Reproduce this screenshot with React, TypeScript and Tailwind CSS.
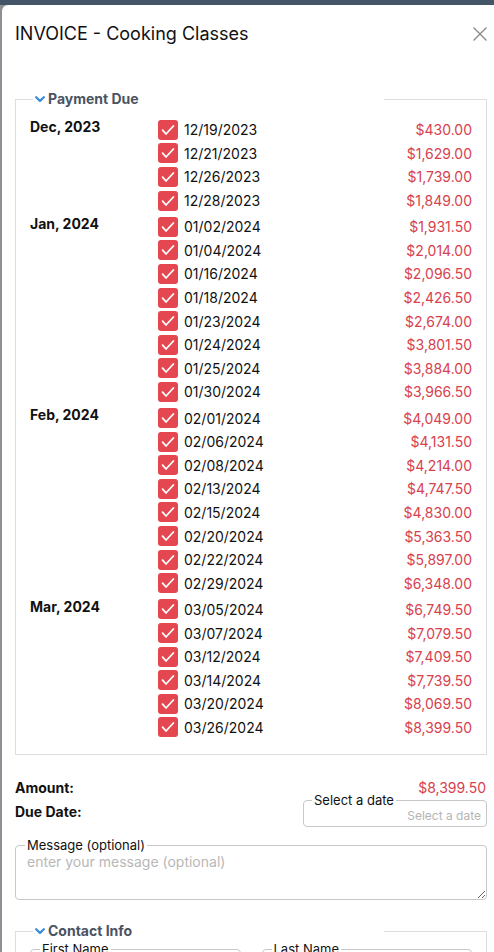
import React from "react";

type Group = { month: string; rows: [string, string][] };

const groups: Group[] = [
  {
    month: "Dec, 2023",
    rows: [
      ["12/19/2023", "$430.00"],
      ["12/21/2023", "$1,629.00"],
      ["12/26/2023", "$1,739.00"],
      ["12/28/2023", "$1,849.00"],
    ],
  },
  {
    month: "Jan, 2024",
    rows: [
      ["01/02/2024", "$1,931.50"],
      ["01/04/2024", "$2,014.00"],
      ["01/16/2024", "$2,096.50"],
      ["01/18/2024", "$2,426.50"],
      ["01/23/2024", "$2,674.00"],
      ["01/24/2024", "$3,801.50"],
      ["01/25/2024", "$3,884.00"],
      ["01/30/2024", "$3,966.50"],
    ],
  },
  {
    month: "Feb, 2024",
    rows: [
      ["02/01/2024", "$4,049.00"],
      ["02/06/2024", "$4,131.50"],
      ["02/08/2024", "$4,214.00"],
      ["02/13/2024", "$4,747.50"],
      ["02/15/2024", "$4,830.00"],
      ["02/20/2024", "$5,363.50"],
      ["02/22/2024", "$5,897.00"],
      ["02/29/2024", "$6,348.00"],
    ],
  },
  {
    month: "Mar, 2024",
    rows: [
      ["03/05/2024", "$6,749.50"],
      ["03/07/2024", "$7,079.50"],
      ["03/12/2024", "$7,409.50"],
      ["03/14/2024", "$7,739.50"],
      ["03/20/2024", "$8,069.50"],
      ["03/26/2024", "$8,399.50"],
    ],
  },
];

function Chevron() {
  return (
    <svg width="10" height="7" viewBox="0 0 10 7" className="shrink-0">
      <path d="M1.2 1.3 L5 5 L8.8 1.3" fill="none" stroke="#3a8bd6" strokeWidth="2.3" strokeLinecap="round" strokeLinejoin="round" />
    </svg>
  );
}

function Check() {
  return (
    <div className="w-[20px] h-[20px] rounded-[3px] bg-[#e4474f] flex items-center justify-center shrink-0">
      <svg width="20" height="20" viewBox="0 0 20 20">
        <path d="M4.6 10.2 L8 14 L15.4 6" fill="none" stroke="#ffffff" strokeWidth="1.8" strokeLinecap="round" strokeLinejoin="round" />
      </svg>
    </div>
  );
}

function SectionLegend({ title }: { title: string }) {
  return (
    <legend className="ml-[3px] w-[351px] pl-[2px] flex items-center gap-[3px] text-[14px] leading-[20px] font-bold text-[#4a5462]">
      <Chevron />
      <span>{title}</span>
    </legend>
  );
}

export default function App() {
  return (
    <div className="w-[494px] h-[952px] overflow-hidden bg-[#435567] font-['Inter','Liberation_Sans',sans-serif] text-[#111]">
      <div className="mt-[5px] h-full bg-[#8d9196] pl-[2px]">
        <div className="h-full bg-white rounded-tl-[6px] pl-[13px] pr-[7px] pt-[16px]">
          <div className="flex items-center justify-between h-[25px]">
            <h1 className="text-[18px] leading-[25px] text-[#111]">INVOICE - Cooking Classes</h1>
            <svg width="16" height="16" viewBox="0 0 16 16" className="mr-[-1px]">
              <path d="M1.5 1.5 L14.5 14.5 M14.5 1.5 L1.5 14.5" stroke="#8a8a8a" strokeWidth="1.4" />
            </svg>
          </div>

          <fieldset className="mt-[43px] border border-[#dedede] pl-[14px] pr-[14px] pt-[9px] pb-[15px]">
            <SectionLegend title="Payment Due" />
            <div className="flex flex-col gap-[2.6px]">
              {groups.map((g) => (
                <div key={g.month} className="flex">
                  <div className="w-[128px] shrink-0 text-[14px] leading-[18px] font-bold">{g.month}</div>
                  <div className="flex-1 flex flex-col">
                    {g.rows.map(([d, a]) => (
                      <div key={d} className="h-[23.6px] flex items-center">
                        <Check />
                        <span className="ml-[6px] text-[14px] text-[#111]">{d}</span>
                        <span className="ml-auto text-[14px] text-[#d8414e]">{a}</span>
                      </div>
                    ))}
                  </div>
                </div>
              ))}
            </div>
          </fieldset>

          <div className="mt-[22px] flex justify-between items-center h-[20px]">
            <span className="text-[14px] font-bold">Amount:</span>
            <span className="text-[14px] text-[#d8414e] mr-[1px]">$8,399.50</span>
          </div>

          <div className="flex justify-between items-start">
            <span className="mt-[5px] text-[14px] leading-[20px] font-bold">Due Date:</span>
            <fieldset className="-mt-[5px] w-[184px] border border-[#c8c8c8] rounded-[4px] px-[8px] pb-[2px]">
              <legend className="px-[2px] text-[13px] leading-[16px]">Select a date</legend>
              <div className="text-right text-[12px] leading-[16px] text-[#b5b5b5] -mr-[3px]">Select a date</div>
            </fieldset>
          </div>

          <fieldset className="mt-[10px] border border-[#c8c8c8] rounded-[4px] pl-[9px] pr-0 pb-0">
            <legend className="px-[2px] text-[13px] leading-[16px]">Message (optional)</legend>
            <textarea
              className="block w-full h-[46px] pl-[2px] text-[14px] leading-[18px] outline-none resize-y placeholder:text-[#b8b8b8] rounded-br-[4px]"
              placeholder="enter your message (optional)"
            />
          </fieldset>

          <fieldset className="mt-[21px] border border-[#dedede] px-[14px] pb-[14px]">
            <SectionLegend title="Contact Info" />
            <div className="grid grid-cols-2 gap-[21px]">
              <fieldset className="border border-[#c8c8c8] rounded-[4px] px-[9px] h-[42px]">
                <legend className="px-[2px] text-[13px] leading-[16px]">First Name</legend>
              </fieldset>
              <fieldset className="border border-[#c8c8c8] rounded-[4px] px-[9px] h-[42px]">
                <legend className="px-[2px] text-[13px] leading-[16px]">Last Name</legend>
              </fieldset>
            </div>
          </fieldset>
        </div>
      </div>
    </div>
  );
}
